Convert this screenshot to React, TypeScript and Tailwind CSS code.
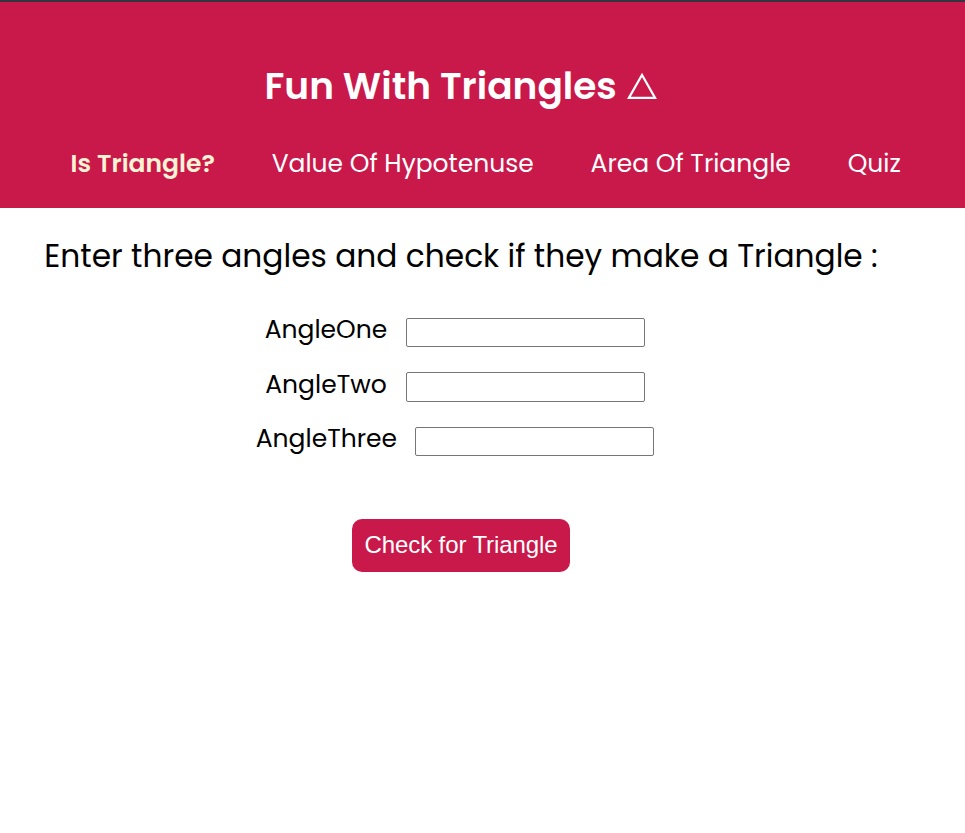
const tabs = ["Value Of Hypotenuse", "Area Of Triangle", "Quiz"];

type FieldProps = { label: string; id: string; labelStyle: string; height: string };

function Field({ label, id, labelStyle, height }: FieldProps) {
  return (
    <div className="flex h-[54.4px] items-start justify-center">
      <label htmlFor={id} className={`text-[25px] ${labelStyle}`}>
        {label}
      </label>
      <input id={id} className={`mt-0.5 w-[239px] rounded-[2px] border border-[#767676] bg-white ${height}`} />
    </div>
  );
}

export default function App() {
  return (
    <div className="h-[833px] w-full overflow-hidden bg-white font-['Poppins','Inter',sans-serif] text-black">
      <header className="h-52 border-t-2 border-[#35333f] bg-[#c9184a] pt-16 text-white">
        <h1 className="ml-[264.5px] flex h-10 text-[37.5px] leading-10 font-semibold">
          Fun With Triangles
          <svg className="mt-[5px] ml-[9.5px] h-[28px] w-[32px]" viewBox="0 0 32 28" fill="none" stroke="currentColor" strokeWidth="2.2">
            <path d="M2.9 26.9 16 4 29.1 26.9Z" />
          </svg>
        </h1>
        <nav className="mt-[43px] ml-[70.6px] flex gap-[56.8px] text-[25px] leading-[30px] whitespace-nowrap">
          <a className="font-semibold text-[#fff3d6]">Is Triangle?</a>
          {tabs.map((tab) => (
            <a key={tab}>{tab}</a>
          ))}
        </nav>
      </header>
      <main className="flex w-[922px] flex-col items-center">
        <h2 className="mt-7 text-[31.25px] leading-10 whitespace-nowrap">
          Enter three angles and check if they make a Triangle :
        </h2>
        <form className="mt-10 mr-3 flex flex-col">
          <Field label="AngleOne" id="one" labelStyle="mr-[19px] leading-[28px]" height="h-[29px]" />
          <Field label="AngleTwo" id="two" labelStyle="mr-[19px] leading-[30px]" height="h-[30px]" />
          <Field label="AngleThree" id="three" labelStyle="mr-[18.2px] leading-[28px]" height="h-[29px]" />
        </form>
        <button className="mt-[39.8px] h-[53px] w-[218px] rounded-[10px] bg-[#c9184a] font-['Liberation_Sans',sans-serif] text-2xl tracking-[-0.1px] text-white">
          Check for Triangle
        </button>
      </main>
    </div>
  );
}
